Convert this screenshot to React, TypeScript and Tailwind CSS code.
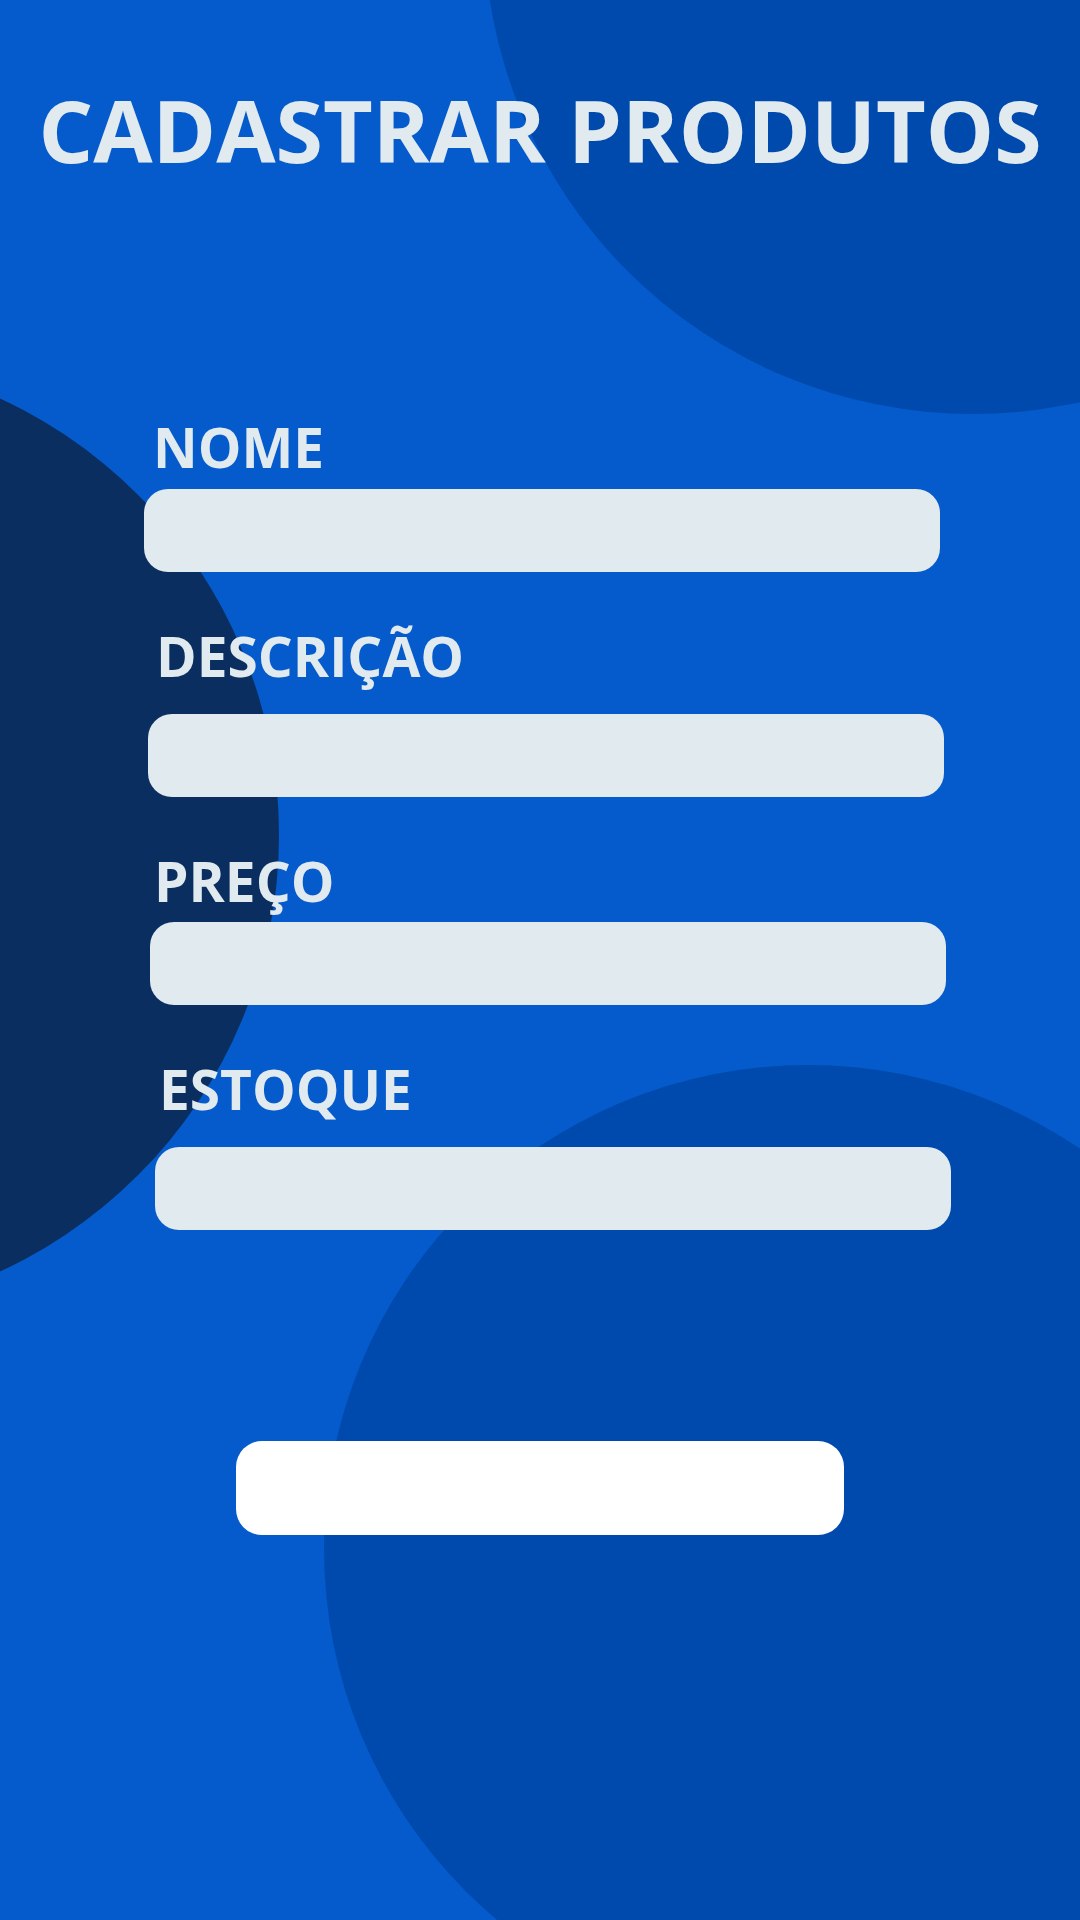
import React from 'react';

const fields = [
  { label: 'NOME', labelClass: 'mt-[246px] ml-[153px]', inputClass: 'mt-[15px] ml-[144px]' },
  { label: 'DESCRIÇÃO', labelClass: 'mt-[56px] ml-[156px]', inputClass: 'mt-[31px] ml-[148px]' },
  { label: 'PREÇO', labelClass: 'mt-[56px] ml-[154px]', inputClass: 'mt-[14px] ml-[150px]' },
  { label: 'ESTOQUE', labelClass: 'mt-[56px] ml-[159px]', inputClass: 'mt-[31px] ml-[155px]' },
];

const App = () => {
  return (
    <div
      className="relative w-[1080px] h-[1920px] overflow-hidden bg-[#055bcc]"
      style={{ fontFamily: '"Open Sans", "Noto Sans", sans-serif' }}
    >
      {/* background circles */}
      <div className="absolute left-[484px] top-[-564px] w-[978px] h-[978px] rounded-full bg-[#004aad]" />
      <div className="absolute left-[-683px] top-[354px] w-[962px] h-[962px] rounded-full bg-[#0a2e5f]" />
      <div className="absolute left-[324px] top-[1065px] w-[968px] h-[968px] rounded-full bg-[#004aad]" />

      <div className="relative flex flex-col">
        <h1 className="pt-[87px] text-center text-[86px] leading-none font-bold text-[#e0eaef]">
          CADASTRAR PRODUTOS
        </h1>

        <form className="flex flex-col items-start" onSubmit={(e) => e.preventDefault()}>
          {fields.map((f) => (
            <React.Fragment key={f.label}>
              <label className={`${f.labelClass} text-[55px] leading-none font-bold text-[#e0eaef]`}>
                {f.label}
              </label>
              <input
                type="text"
                className={`${f.inputClass} w-[796px] h-[83px] rounded-[24px] bg-[#e1eaee] outline-none px-6 text-3xl`}
              />
            </React.Fragment>
          ))}

          <button
            type="submit"
            className="mt-[211px] self-center w-[608px] h-[94px] rounded-[26px] bg-white"
          />
        </form>
      </div>
    </div>
  );
};

export default App;
